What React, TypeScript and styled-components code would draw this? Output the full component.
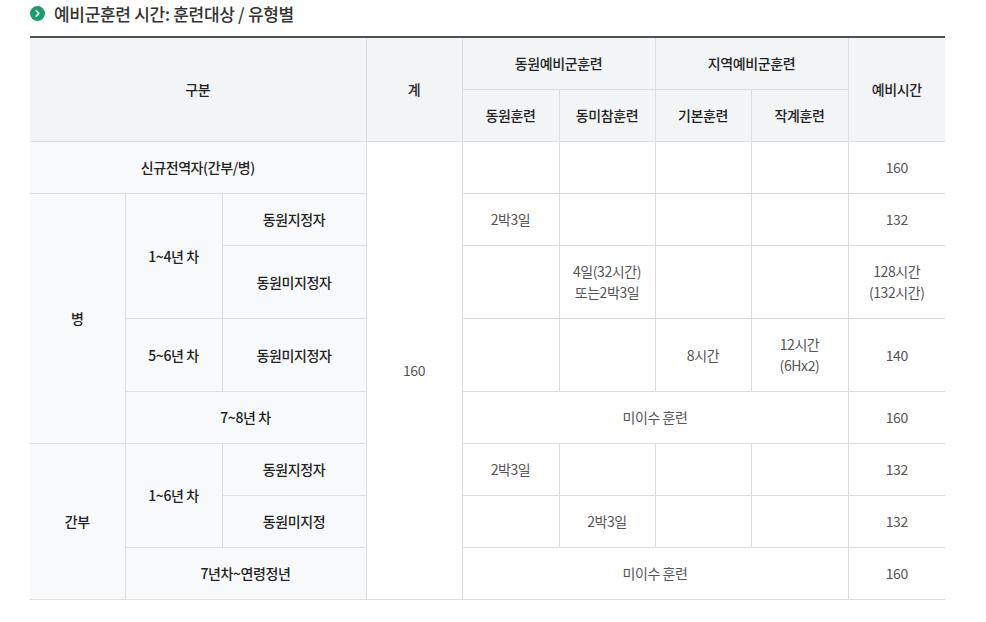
import styled, { createGlobalStyle } from "styled-components";

const GlobalStyle = createGlobalStyle`
  body {
    margin: 0;
    background: #ffffff;
    font-family: "Noto Sans CJK KR", "Noto Sans", sans-serif;
  }
`;

const Page = styled.div`
  padding: 3px 41px 0 30px;
`;

const Title = styled.h3`
  display: flex;
  align-items: center;
  gap: 9px;
  margin: 0 0 13px;
  height: 20px;
  font-size: 17px;
  font-weight: 500;
  color: #333;
  letter-spacing: -0.3px;
`;

const Bullet = styled.span`
  display: inline-flex;
  align-items: center;
  justify-content: center;
  width: 15px;
  height: 15px;
  border-radius: 50%;
  background: #1e9b6c;
`;

const Table = styled.table`
  width: 915px;
  table-layout: fixed;
  border-collapse: collapse;
  border-top: 2px solid #4c505c;
  border-left: hidden;
  border-right: hidden;
  font-size: 14px;
  line-height: 21px;
  letter-spacing: -0.4px;
  text-align: center;
`;

const HeadCell = styled.th`
  height: 51px;
  padding: 0 4px;
  border: 1px solid #dcdde0;
  background: #f3f4f6;
  color: #222;
  font-weight: 500;
  vertical-align: middle;
`;

const RowHead = styled.th`
  padding: 15px 4px;
  border: 1px solid #dcdde0;
  background: #f8f9fb;
  color: #222;
  font-weight: 500;
  vertical-align: middle;
`;

const Cell = styled.td`
  padding: 15px 4px;
  border: 1px solid #dcdde0;
  background: #ffffff;
  color: #555;
  font-weight: 400;
  vertical-align: middle;
`;

const COLS = [95, 97, 144, 96, 97, 96, 96, 97, 97];

export default function App() {
  return (
    <>
      <GlobalStyle />
      <Page>
        <Title>
          <Bullet>
            <svg width="9" height="9" viewBox="0 0 10 10">
              <path d="M3.6 2 L6.6 5 L3.6 8" fill="none" stroke="#fff" strokeWidth="1.8" strokeLinecap="round" strokeLinejoin="round" />
            </svg>
          </Bullet>
          예비군훈련 시간: 훈련대상 / 유형별
        </Title>
        <Table>
          <colgroup>
            {COLS.map((w, i) => (
              <col key={i} style={{ width: w }} />
            ))}
          </colgroup>
          <thead>
            <tr>
              <HeadCell colSpan={3} rowSpan={2}>구분</HeadCell>
              <HeadCell rowSpan={2}>계</HeadCell>
              <HeadCell colSpan={2}>동원예비군훈련</HeadCell>
              <HeadCell colSpan={2}>지역예비군훈련</HeadCell>
              <HeadCell rowSpan={2}>예비시간</HeadCell>
            </tr>
            <tr>
              <HeadCell>동원훈련</HeadCell>
              <HeadCell>동미참훈련</HeadCell>
              <HeadCell>기본훈련</HeadCell>
              <HeadCell>작계훈련</HeadCell>
            </tr>
          </thead>
          <tbody>
            <tr>
              <RowHead colSpan={3}>신규전역자(간부/병)</RowHead>
              <Cell rowSpan={8}>160</Cell>
              <Cell />
              <Cell />
              <Cell />
              <Cell />
              <Cell>160</Cell>
            </tr>
            <tr>
              <RowHead rowSpan={4}>병</RowHead>
              <RowHead rowSpan={2}>1~4년 차</RowHead>
              <RowHead>동원지정자</RowHead>
              <Cell>2박3일</Cell>
              <Cell />
              <Cell />
              <Cell />
              <Cell>132</Cell>
            </tr>
            <tr>
              <RowHead>동원미지정자</RowHead>
              <Cell />
              <Cell>
                4일(32시간)
                <br />
                또는2박3일
              </Cell>
              <Cell />
              <Cell />
              <Cell>
                128시간
                <br />
                (132시간)
              </Cell>
            </tr>
            <tr>
              <RowHead>5~6년 차</RowHead>
              <RowHead>동원미지정자</RowHead>
              <Cell />
              <Cell />
              <Cell>8시간</Cell>
              <Cell>
                12시간
                <br />
                (6Hx2)
              </Cell>
              <Cell>140</Cell>
            </tr>
            <tr>
              <RowHead colSpan={2}>7~8년 차</RowHead>
              <Cell colSpan={4}>미이수 훈련</Cell>
              <Cell>160</Cell>
            </tr>
            <tr>
              <RowHead rowSpan={3}>간부</RowHead>
              <RowHead rowSpan={2}>1~6년 차</RowHead>
              <RowHead>동원지정자</RowHead>
              <Cell>2박3일</Cell>
              <Cell />
              <Cell />
              <Cell />
              <Cell>132</Cell>
            </tr>
            <tr>
              <RowHead>동원미지정</RowHead>
              <Cell />
              <Cell>2박3일</Cell>
              <Cell />
              <Cell />
              <Cell>132</Cell>
            </tr>
            <tr>
              <RowHead colSpan={2}>7년차~연령정년</RowHead>
              <Cell colSpan={4}>미이수 훈련</Cell>
              <Cell>160</Cell>
            </tr>
          </tbody>
        </Table>
      </Page>
    </>
  );
}
